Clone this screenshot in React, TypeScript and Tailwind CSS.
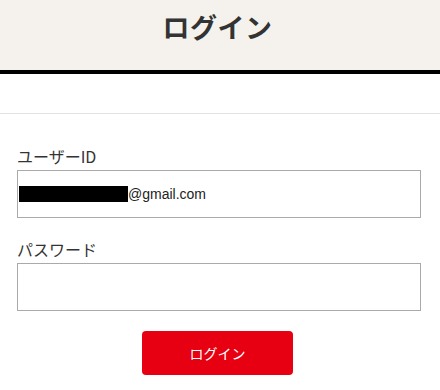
export default function App() {
  return (
    <div className="min-h-[390px] w-[440px] bg-white font-['Noto_Sans_CJK_JP',sans-serif] text-[#333]">
      <header className="flex h-[74px] items-start justify-center border-b-4 border-black bg-[#f5f2ed] pt-[5px]">
        <h1 className="mr-[5px] text-[27px] font-bold leading-[44px] tracking-[0.02em] text-[#333]">ログイン</h1>
      </header>
      <div className="h-[40px] border-b border-[#e3e3e3]" />
      <form className="flex flex-col pt-[30px]" onSubmit={(e) => e.preventDefault()}>
        <label className="ml-[17px] text-[16px] leading-[24px] text-[#333]">ユーザーID</label>
        <div className="ml-[17px] mt-[2px] flex h-[48px] w-[404px] items-center border border-[#aaa] pl-[1px]">
          <span className="h-[16px] w-[109px] bg-black" />
          <span className="font-['Liberation_Sans','Noto_Sans_CJK_JP',sans-serif] text-[14px] text-[#222]">@gmail.com</span>
        </div>
        <label className="ml-[17px] mt-[19px] text-[16px] leading-[24px] text-[#333]">パスワード</label>
        <input
          type="password"
          className="ml-[17px] mt-[2px] h-[48px] w-[404px] border border-[#aaa] px-2 outline-none"
        />
        <button
          type="submit"
          className="ml-[142px] mt-[20px] h-[44px] w-[151px] rounded-[4px] bg-[#e60012] text-[14px] text-white"
        >
          ログイン
        </button>
      </form>
    </div>
  );
}
